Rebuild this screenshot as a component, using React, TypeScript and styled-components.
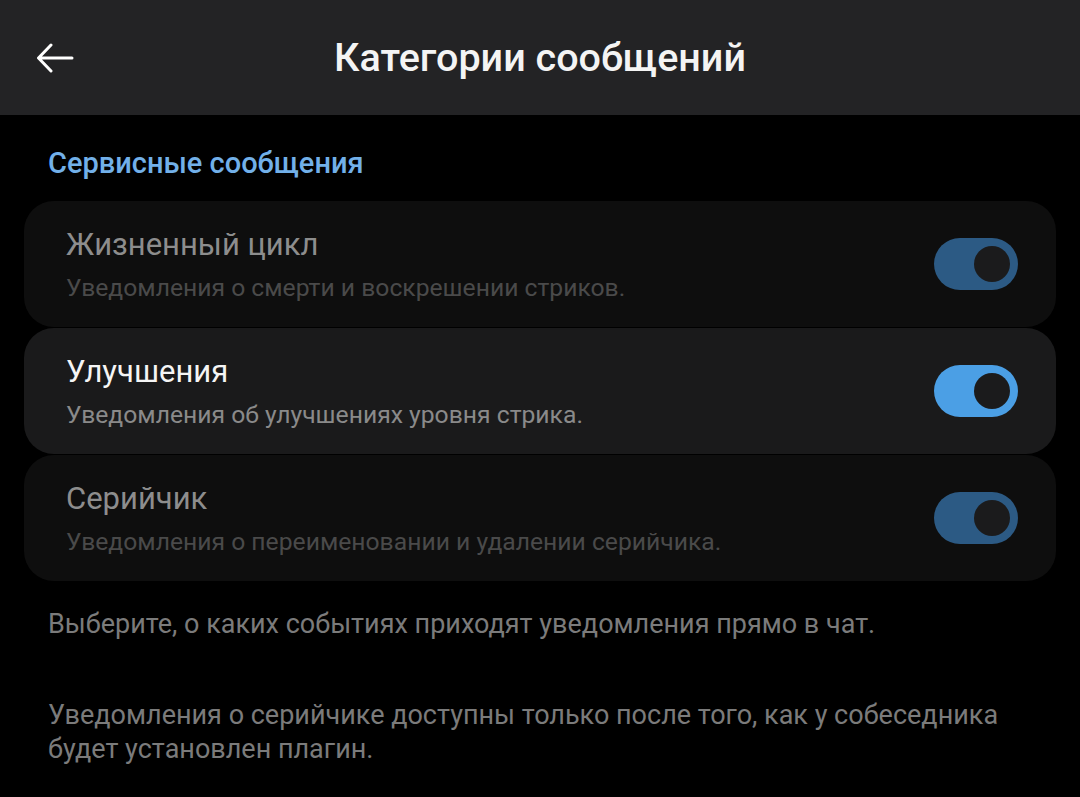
import styled, { createGlobalStyle } from "styled-components";

const GlobalStyle = createGlobalStyle`
  html, body {
    margin: 0;
    padding: 0;
    background: #000;
  }
  body {
    font-family: Roboto, "Noto Sans", sans-serif;
    -webkit-font-smoothing: antialiased;
  }
`;

const Screen = styled.div`
  width: 1080px;
  min-height: 797px;
  background: #000;
  color: #fff;
`;

const TopBar = styled.header`
  height: 115px;
  background: #232325;
  display: flex;
  align-items: center;
  padding: 0 0 0 34px;
  box-sizing: border-box;
`;

const BackButton = styled.button`
  width: 42px;
  height: 42px;
  padding: 0;
  border: 0;
  background: transparent;
  color: #fff;
  display: flex;
  align-items: center;
  justify-content: center;
  cursor: pointer;
`;

const Title = styled.h1`
  flex: 1;
  margin: 0 0 0 -76px;
  text-align: center;
  font-size: 39.5px;
  font-weight: 500;
  color: #f4f4f4;
`;

const Content = styled.main`
  padding: 31px 24px 0;
`;

const SectionLabel = styled.h2`
  margin: 0 0 21px 24px;
  font-size: 29px;
  line-height: 34px;
  font-weight: 500;
  color: #72b0e9;
`;

const CardList = styled.div`
  display: flex;
  flex-direction: column;
  gap: 1px;
`;

const Card = styled.div<{ $active: boolean }>`
  height: 126px;
  border-radius: 30px;
  background: ${(p) => (p.$active ? "#1a1a1b" : "#0e0e0e")};
  display: flex;
  align-items: center;
  padding: 0 38px 0 42px;
  box-sizing: border-box;
`;

const CardText = styled.div`
  flex: 1;
  display: flex;
  flex-direction: column;
  gap: 10px;
`;

const CardTitle = styled.div<{ $active: boolean }>`
  font-size: 31px;
  line-height: 36px;
  color: ${(p) => (p.$active ? "#f5f5f5" : "#8d8d8d")};
`;

const CardHint = styled.div<{ $active: boolean }>`
  font-size: 24.7px;
  line-height: 29px;
  color: ${(p) => (p.$active ? "#8a8a8a" : "#4a4a4a")};
`;

const Switch = styled.div<{ $active: boolean }>`
  width: 84px;
  height: 52px;
  border-radius: 26px;
  background: ${(p) => (p.$active ? "#4b9fe5" : "#2c5a84")};
  display: flex;
  align-items: center;
  justify-content: flex-end;
  padding: 0 8px;
  box-sizing: border-box;
`;

const Knob = styled.span`
  width: 36px;
  height: 36px;
  border-radius: 50%;
  background: #1b1b1c;
`;

const Note = styled.p<{ $gap: number }>`
  margin: ${(p) => p.$gap}px 48px 0;
  font-size: 27px;
  line-height: 34px;
  color: #7b7b7b;
`;

const categories = [
  {
    title: "Жизненный цикл",
    hint: "Уведомления о смерти и воскрешении стриков.",
    active: false,
  },
  {
    title: "Улучшения",
    hint: "Уведомления об улучшениях уровня стрика.",
    active: true,
  },
  {
    title: "Серийчик",
    hint: "Уведомления о переименовании и удалении серийчика.",
    active: false,
  },
];

export default function App() {
  return (
    <Screen>
      <GlobalStyle />
      <TopBar>
        <BackButton aria-label="Назад">
          <svg width="38" height="30" viewBox="0 0 38 30" fill="none">
            <path
              d="M36 15H3M15 2L2.5 15L15 28"
              stroke="currentColor"
              strokeWidth="3"
              strokeLinecap="round"
              strokeLinejoin="round"
            />
          </svg>
        </BackButton>
        <Title>Категории сообщений</Title>
      </TopBar>

      <Content>
        <SectionLabel>Сервисные сообщения</SectionLabel>
        <CardList>
          {categories.map((c) => (
            <Card key={c.title} $active={c.active}>
              <CardText>
                <CardTitle $active={c.active}>{c.title}</CardTitle>
                <CardHint $active={c.active}>{c.hint}</CardHint>
              </CardText>
              <Switch $active={c.active}>
                <Knob />
              </Switch>
            </Card>
          ))}
        </CardList>
      </Content>

      <Note $gap={26}>Выберите, о каких событиях приходят уведомления прямо в чат.</Note>
      <Note $gap={57}>
        Уведомления о серийчике доступны только после того, как у собеседника
        будет установлен плагин.
      </Note>
    </Screen>
  );
}
